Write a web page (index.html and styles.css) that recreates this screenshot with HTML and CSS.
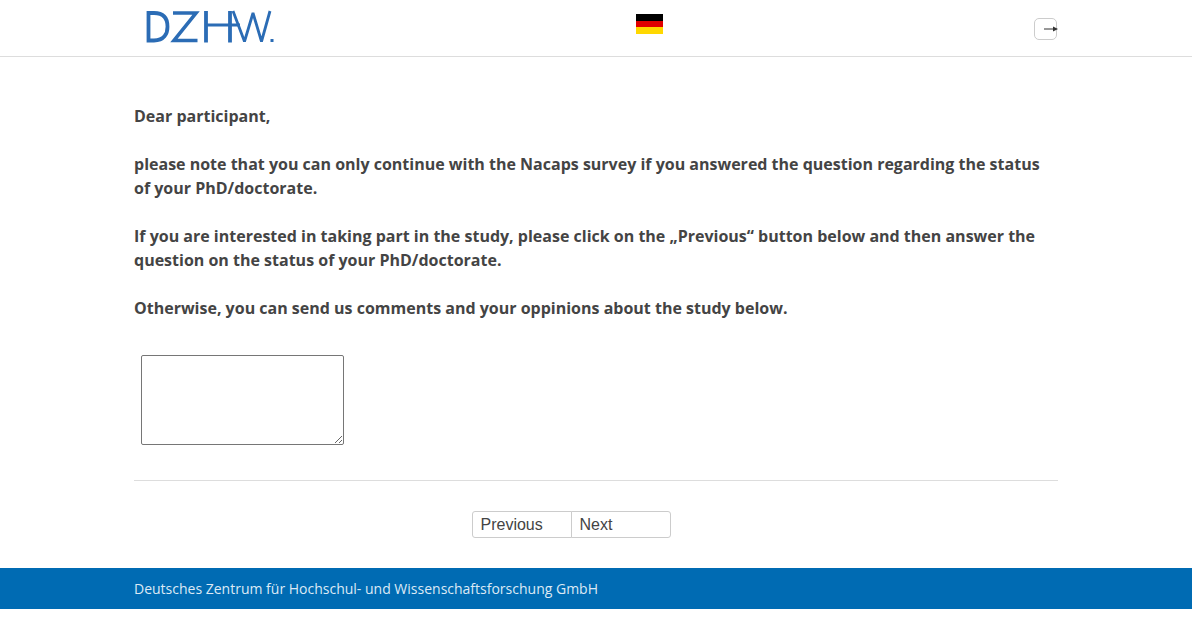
FILE: index.html
```html
<!DOCTYPE html>
<html lang="en">
<head>
<meta charset="utf-8">
<title>DZHW Survey</title>
<link rel="stylesheet" href="styles.css">
</head>
<body>
<header class="topbar">
  <div class="topbar-inner">
    <svg class="logo" width="130" height="36" viewBox="0 0 130 36" aria-label="DZHW">
      <g fill="none" stroke="#2b6cb5" stroke-linejoin="bevel">
        <path stroke-width="3.800" stroke-linejoin="miter" d="M4.500 5V32.500H10C20 32.500 23.500 26 23.500 18.700C23.500 11 20 5 10 5Z"/>
        <path stroke-width="3.600" stroke-linejoin="miter" d="M29 5H52L30 32.500H53.500"/>
        <path stroke-width="3.800" d="M62 3V34.500M86 3V34.500"/>
        <path stroke-width="2.800" d="M62 17H96"/>
        <path stroke-width="2.800" d="M89 3L100.500 33.500L109 5L117.500 33.500L126 3"/>
      </g>
      <rect x="126.500" y="31" width="3" height="3" fill="#2b6cb5"/>
    </svg>
    <div class="flag"><span class="black"></span><span class="red"></span><span class="gold"></span></div>
    <button class="logout" type="button" aria-label="Log out">
      <svg width="15" height="8" viewBox="0 0 15 8"><path d="M0 4h11" stroke="#333" stroke-width="1"/><path d="M9 1.500l5 2.500-5 2.500z" fill="#333"/></svg>
    </button>
  </div>
</header>
<main class="content">
  <div class="message">
    <p>Dear participant,</p>
    <p>please note that you can only continue with the Nacaps survey if you answered the question regarding the status of your PhD/doctorate.</p>
    <p>If you are interested in taking part in the study, please click on the „Previous“ button below and then answer the question on the status of your PhD/doctorate.</p>
    <p>Otherwise, you can send us comments and your oppinions about the study below.</p>
  </div>
  <textarea class="comment" aria-label="Comments"></textarea>
  <hr class="rule">
  <nav class="pager">
    <button class="pager-btn" type="button">Previous</button>
    <button class="pager-btn" type="button">Next</button>
  </nav>
</main>
<footer class="footer">
  <div class="footer-inner">Deutsches Zentrum für Hochschul- und Wissenschaftsforschung GmbH</div>
</footer>
</body>
</html>
```
FILE: styles.css
```css
* { box-sizing: border-box; }
html, body { margin: 0; padding: 0; background: #fff; }
body { font-family: "Open Sans", sans-serif; color: #444; font-size: 16px; line-height: 24px; }
.topbar { height: 57px; border-bottom: 1px solid #ddd; }
.topbar-inner { width: 924px; margin: 0 auto; display: flex; align-items: flex-start; }
.logo { margin: 8px 0 0 10px; overflow: visible; display: block; flex: none; }
.flag { width: 27px; height: 20px; margin: 14px 0 0 362px; display: flex; flex-direction: column; }
.flag span { flex: 1; }
.black { background: #000; }
.red { background: #e00000; }
.gold { background: #ffd800; }
.logout { width: 23px; height: 22px; margin: 18px 1px 0 auto; padding: 0 0 0 9px; background: #fff; border: 1px solid #ccc; border-radius: 5px; display: flex; align-items: center; overflow: visible; }
.logout svg { flex: none; }
.content { width: 924px; margin: 0 auto; padding-top: 47px; }
.message { font-weight: 700; }
.message p { margin: 0 0 24px; }
.comment { display: block; width: 203px; height: 90px; margin: 35px 0 0 7px; border: 1px solid #767676; border-radius: 2px; background: #fff; padding: 2px; }
.rule { border: 0; border-top: 1px solid #ddd; margin: 35px 0 0; }
.pager { display: flex; justify-content: center; margin-top: 30px; padding-right: 50px; }
.pager-btn { width: 100px; height: 27px; padding: 0 8px; text-align: left; font-family: "Liberation Sans", sans-serif; font-size: 16px; color: #444; background: #fff; border: 1px solid #ccc; border-radius: 3px 0 0 3px; }
.pager-btn + .pager-btn { margin-left: -1px; border-radius: 0 3px 3px 0; }
.footer { margin-top: 30px; height: 41px; background: #006bb3; color: #dce9f5; font-size: 14px; line-height: 41px; }
.footer-inner { width: 924px; margin: 0 auto; }
```
